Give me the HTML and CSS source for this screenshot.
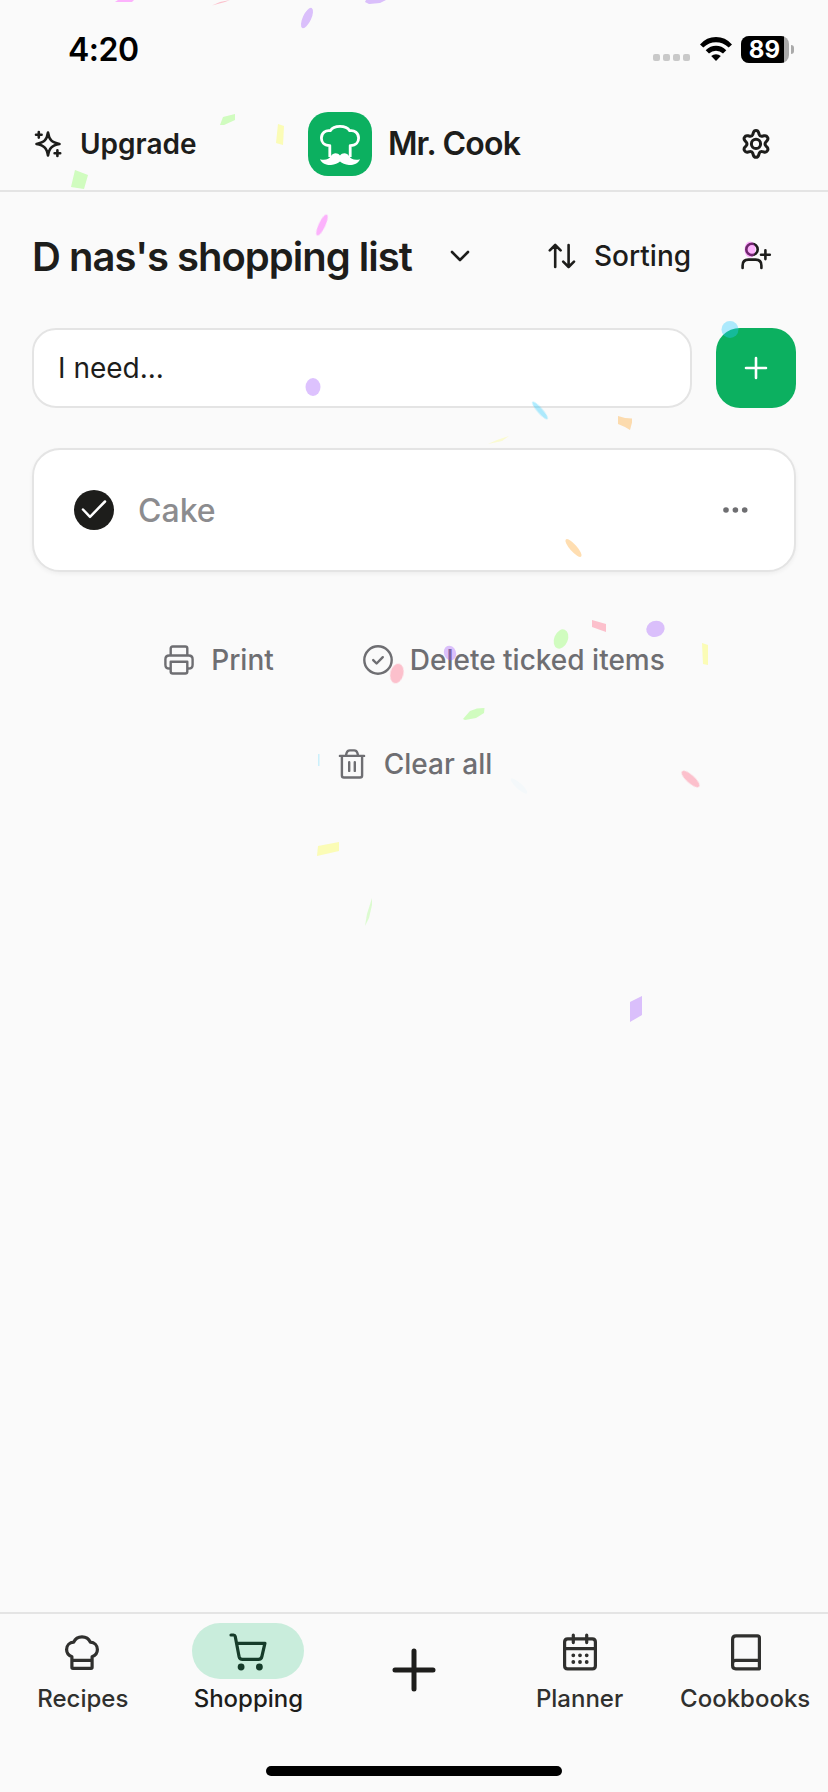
FILE: index.html
```html
<!DOCTYPE html>
<html lang="en">
<head>
<meta charset="utf-8">
<title>Mr. Cook</title>
<link rel="stylesheet" href="styles.css">
</head>
<body>
<div class="app">
  <div class="status">
    <span class="time">4:20</span>
    <div class="signals">
      <span class="cell"><i></i><i></i><i></i><i></i></span>
      <svg class="wifi" width="32" height="24" viewBox="0 0 32 24"><path d="M0 7.4Q6.6 0 16 0t16 7.4l-3.3 3.2Q23 5.2 16 5.2T3.300 10.600z"/><path d="M5.700 13.200Q10.300 8.800 16 8.800t10.300 4.400l-3.300 3.200Q20 13.700 16 13.700t-7 2.700z"/><path d="M11.200 19.100Q13.300 17.200 16 17.200t4.800 1.900L16 24z"/></svg>
      <span class="battery"><span class="level">89</span></span>
      <span class="nub"></span>
    </div>
  </div>

  <header class="header">
    <button class="upgrade">
      <svg class="icon" viewBox="0 0 32 32"><path d="M16 4.500c1.200 7.400 3.500 9.900 11.500 11.500-8 1.600-10.300 4.100-11.500 11.500C14.800 20.100 12.500 17.600 4.500 16 12.500 14.400 14.800 11.900 16 4.500z"/><path d="M6.800 4v5.600M4 6.800h5.600M25.400 22.400v5.600M22.600 25.200h5.600"/></svg>
      <span class="t-upgrade">Upgrade</span>
    </button>
    <div class="brand">
      <span class="logo"><svg width="64" height="64" viewBox="0 0 64 64"><path class="hat" d="M21.800 45V33.600C15.500 33.600 13.400 29.500 13.400 26c0-5 4.300-8.200 8.900-7.300C24 15.900 27.500 14.300 32 14.300s8 1.600 9.700 4.400C46.300 17.800 50.600 21 50.600 26c0 3.500-2.100 7.600-8.400 7.600V45"/><path class="stache" d="M32 43.600c-2.300-3.300-7-3-9 .3-1.800 3-5.500 4.800-11 3.300 2 4.400 6.500 6 11 5.800 3.800-.1 7-1.600 9-3.400 2 1.800 5.200 3.300 9 3.400 4.500.2 9-1.400 11-5.800-5.500 1.500-9.200-.3-11-3.300-2-3.300-6.700-3.600-9-.3z"/></svg></span>
      <span class="t-brand">Mr. Cook</span>
    </div>
    <button class="settings">
      <svg class="icon gear" viewBox="0 0 32 32"><path d="M16 2.500c1.500 0 2.300.9 2.700 2.300l.5 1.700c.5 1.400 1.700 2 3.100 1.700l1.600-.4c1.600-.4 2.900.1 3.600 1.400.7 1.200.5 2.400-.5 3.500l-1.100 1.200c-1 1.200-1 2.800 0 4l1.100 1.200c1 1.100 1.200 2.300.5 3.500-.7 1.300-2 1.800-3.600 1.400l-1.600-.4c-1.400-.3-2.600.3-3.100 1.700l-.5 1.700c-.4 1.400-1.200 2.300-2.700 2.300s-2.300-.9-2.700-2.300l-.5-1.700c-.5-1.400-1.700-2-3.100-1.700l-1.600.4c-1.600.4-2.900-.1-3.600-1.400-.7-1.200-.5-2.400.5-3.500l1.100-1.200c1-1.200 1-2.800 0-4L5 12.700c-1-1.100-1.200-2.300-.5-3.500.7-1.300 2-1.800 3.600-1.400l1.600.4c1.400.3 2.600-.3 3.100-1.700l.5-1.700c.4-1.400 1.200-2.300 2.700-2.300z"/><circle cx="16" cy="15.900" r="4.600"/></svg>
    </button>
  </header>

  <main class="main">
    <div class="title-row">
      <h1 class="title">D nas's shopping list</h1>
      <svg class="icon chevron" viewBox="0 0 32 32"><path d="M8 12l8 8 8-8"/></svg>
      <button class="sorting">
        <svg class="icon" viewBox="0 0 32 32"><path d="M9.200 27V5M3.800 10.400L9.200 5l5.400 5.400M22.600 5v22M17.200 21.600l5.400 5.400 5.400-5.400"/></svg>
        <span class="t-sorting">Sorting</span>
      </button>
      <svg class="icon" viewBox="0 0 32 32"><circle cx="12" cy="9.400" r="5.700"/><path d="M2.600 28v-2.600c0-3.800 2-5.800 5.800-5.800h7.200c3.800 0 5.800 2 5.800 5.800V28M25.400 10.300v8.800M21 14.700h8.800"/></svg>
    </div>

    <div class="entry">
      <div class="field"><span class="t-need">I need...</span></div>
      <button class="add"><svg class="icon" viewBox="0 0 32 32"><path d="M16 6v20M6 16h20"/></svg></button>
    </div>

    <div class="card">
      <span class="check"><svg width="40" height="40" viewBox="0 0 40 40"><path d="M9 19.500l7 7.300L31 11.500"/></svg></span>
      <span class="t-cake">Cake</span>
      <svg class="more" width="32" height="32" viewBox="0 0 32 32"><circle cx="4" cy="16" r="2.800"/><circle cx="13.400" cy="16" r="2.800"/><circle cx="22.700" cy="16" r="2.800"/></svg>
    </div>

    <div class="actions">
      <button class="action">
        <svg class="icon" viewBox="0 0 32 32"><path d="M7.700 11.500V4.500q0-2 2-2h12.600q2 0 2 2v7M7.700 24.500H6.200q-3.800 0-3.800-3.800v-5.400q0-3.800 3.800-3.800h19.600q3.800 0 3.800 3.800v5.400q0 3.800-3.800 3.800h-1.500M7.700 17.800h16.600v9.700q0 2-2 2H9.700q-2 0-2-2z"/></svg>
        <span class="t-print">Print</span>
      </button>
      <button class="action">
        <svg class="icon" viewBox="0 0 32 32"><circle cx="16" cy="16" r="13.700"/><path d="M11.200 16.100l3.400 3.400 6.200-6.300"/></svg>
        <span class="t-delete">Delete ticked items</span>
      </button>
      <button class="action">
        <svg class="icon" viewBox="0 0 32 32"><path d="M3.900 7.900h24.200M9.900 7.500l.7-2.500q.8-2.600 3.200-2.600h4.400q2.400 0 3.200 2.600l.7 2.500M5.900 8v19.500q0 2 2 2h16.200q2 0 2-2V8M13.200 14.200v8.700M18.800 14.200v8.700"/></svg>
        <span class="t-clear">Clear all</span>
      </button>
    </div>
  </main>

  <nav class="tabs">
    <a class="tab">
      <span class="tab-icon"><svg class="icon40" viewBox="1 0 40 40"><path d="M9.900 36.300V25.800C6.500 24.400 4.600 21.800 4.600 18.500c0-4.300 3.100-7.200 7.100-7.400 1.400-3.100 4.500-5.200 8.300-5.200s6.900 2.100 8.300 5.200c4 .2 7.100 3.100 7.100 7.400 0 3.300-1.900 5.900-5.300 7.300v10.500q0 1-1 1H10.900q-1 0-1-1zM9.900 29.400h20.200"/></svg></span>
      <span class="t-recipes">Recipes</span>
    </a>
    <a class="tab active">
      <span class="tab-icon"><svg class="icon40" viewBox="0 0 40 40"><path d="M3 4h2.600q1.300 0 1.600 1.300L11 25.300q.7 3.100 3.600 3.100h15.800q2.900 0 3.500-3l3-13.100H8.700"/><circle class="wheel" cx="13.100" cy="36" r="3.400"/><circle class="wheel" cx="31.400" cy="36" r="3.400"/></svg></span>
      <span class="t-shopping">Shopping</span>
    </a>
    <a class="tab plus"><svg width="44" height="44" viewBox="0 0 44 44"><path d="M22 3v38M3 22h38"/></svg></a>
    <a class="tab">
      <span class="tab-icon"><svg class="icon40" viewBox="0 0 40 40"><path d="M7.700 7.900h24.600q3.100 0 3.100 3.100v23.800q0 3.100-3.100 3.100H7.700q-3.100 0-3.100-3.100V11q0-3.100 3.100-3.100zM4.600 17.600h30.800M13.300 4v7.600M26.700 4v7.600"/><path class="dots" d="M13.300 24.300h.01M20 24.300h.01M26.700 24.300h.01M13.300 31h.01M20 31h.01M26.700 31h.01"/></svg></span>
      <span class="t-planner">Planner</span>
    </a>
    <a class="tab">
      <span class="tab-icon"><svg class="icon40" viewBox="-1 0 40 40"><path d="M6.600 34.800V8.200q0-3.400 3.400-3.400h21.400q2 0 2 2v31H9.800q-3.200 0-3.200-3v-2.400q0-3 3.200-3h23.600"/></svg></span>
      <span class="t-cookbooks">Cookbooks</span>
    </a>
  </nav>
  <div class="home"><span></span></div>

  <svg class="confetti" width="828" height="1792" viewBox="0 0 828 1792">
    <g fill="#a25afd">
      <path d="M365 2l4 2 11-1 6-3h-20z"/>
      <ellipse cx="307" cy="18" rx="4.200" ry="11" transform="rotate(25 307 18)"/>
      <ellipse cx="313" cy="387" rx="7.500" ry="9"/>
      <ellipse cx="450" cy="653" rx="6" ry="7.500" transform="rotate(-20 450 653)"/>
      <ellipse cx="655.500" cy="629" rx="9.300" ry="8" transform="rotate(-20 655 629)"/>
      <path d="M630 1002l12-6v19l-12 7z"/>
    </g>
    <g fill="#ff36ff">
      <path d="M115 2l3-2h16l-2 2z"/>
      <ellipse cx="322" cy="225" rx="3.300" ry="11.500" transform="rotate(25 322 225)"/>
      <ellipse cx="750" cy="249.500" rx="5.500" ry="8"/>
    </g>
    <g fill="#ff5e7e">
      <path d="M212 5.500L220 2l10-2-5 2z"/>
      <ellipse cx="397" cy="673.500" rx="6.500" ry="10" transform="rotate(14 397 673)"/>
      <path d="M592 620l14 4v8l-14-5z"/>
      <ellipse cx="690.500" cy="779" rx="4" ry="11.500" transform="rotate(-48 690.500 779)"/>
    </g>
    <g fill="#88ff5a">
      <path d="M220 125l3-8 12-3v6l-11 5zM75 170l13 5-4 14-13-2z"/>
      <ellipse cx="561" cy="639" rx="6.800" ry="10" transform="rotate(22 561 639)"/>
      <path d="M463 719l7-8 7-2.500 7.500-.5-.5 5-8 5-11 2z"/>
      <path opacity=".7" d="M372 898v7l-3 13-4 8 2-12z"/>
    </g>
    <g fill="#fcff42">
      <path d="M278 124l6 2-1 19-7-2zM702 643l6 2v20l-5-1zM318 846l21-4v9l-22 5z"/>
      <path opacity=".6" d="M488 444l9-4 12-4-7 5z"/>
    </g>
    <g fill="#26ccff">
      <circle cx="730" cy="329.500" r="8.500"/>
      <ellipse cx="540" cy="410.500" rx="2.600" ry="11.500" transform="rotate(-41 540 410.500)"/>
      <path opacity=".6" d="M318 754h1.500v12h-1.500z"/>
      <ellipse opacity=".08" cx="519" cy="786" rx="3" ry="11" transform="rotate(-48 519 786)"/>
    </g>
    <g fill="#ffa62d">
      <path d="M618 416l7 2 7 .5v4l-2 7.500-5-3-7-3z"/>
      <ellipse cx="573.500" cy="548" rx="3.500" ry="11.500" transform="rotate(-42 573.500 548)"/>
    </g>
  </svg>
</div>
</body>
</html>
```

FILE: styles.css
```css
* { box-sizing: border-box; }
body { margin: 0; background: #fafafa; color: #1d1d1b; font-family: Inter, "Noto Sans", sans-serif; }
button { border: 0; padding: 0; background: none; color: inherit; font: inherit; }
svg { display: block; flex: none; }
span, h1 { white-space: nowrap; }

.app { position: relative; display: flex; flex-direction: column; width: 828px; height: 1792px; overflow: hidden; }

.status { display: flex; justify-content: space-between; height: 96px; padding: 0 34px 0 68px; color: #000; }
.time { margin-top: 30px; font-size: 32px; line-height: 40px; font-weight: 600; letter-spacing: -.5px; }
.signals { display: flex; align-items: flex-start; padding-top: 36px; }
.cell { display: flex; gap: 3px; margin: 18px 10px 0 0; }
.cell i { width: 7px; height: 7px; border-radius: 2px; background: #c9c9c9; }
.wifi { margin: 1px 9px 0 0; fill: #000; }
.battery { width: 48px; height: 27px; border-radius: 8px; overflow: hidden; background: #aaa; }
.level { display: block; width: 43px; padding-left: 4px; background: #000; color: #fff; font-size: 24px; line-height: 28px; font-weight: 700; text-align: center; letter-spacing: .2px; }
.nub { width: 3px; height: 9px; margin: 9px 0 0 2px; border-radius: 0 3px 3px 0; background: #aaa; }

.icon { width: 32px; height: 32px; fill: none; stroke: currentColor; stroke-width: 2.6; stroke-linecap: round; stroke-linejoin: round; }
.gear { stroke-width: 3; }

.header { display: grid; grid-template-columns: 1fr auto 1fr; align-items: center; height: 96px; padding: 1px 56px 0 32px; border-bottom: 2px solid #e4e4e4; }
.upgrade { display: flex; align-items: center; gap: 16px; font-size: 28px; font-weight: 600; line-height: 40px; }
.brand { display: flex; align-items: center; gap: 16px; margin-left: 24px; font-size: 32px; font-weight: 600; line-height: 40px; letter-spacing: -.8px; }
.logo { border-radius: 20px; background: #0cb060; }
.hat { fill: none; stroke: #fff; stroke-width: 2.8; stroke-linejoin: round; }
.stache { fill: #fff; }
.settings { justify-self: end; }

.main { flex: 1; padding: 24px 32px 0; }
.title-row { display: flex; align-items: center; height: 80px; padding-right: 24px; }
.title { width: 412px; margin: 0; padding-top: 2px; font-size: 40px; line-height: 48px; font-weight: 600; letter-spacing: -1px; }
.sorting { display: flex; align-items: center; gap: 16px; margin-left: 70px; margin-right: auto; font-size: 28px; font-weight: 500; line-height: 40px; }

.entry { display: flex; gap: 24px; margin-top: 32px; }
.field { flex: 1; display: flex; align-items: center; height: 80px; padding: 0 24px; border: 2px solid #e4e4e4; border-radius: 24px; background: #fff; font-size: 28px; }
.add { display: grid; place-items: center; width: 80px; height: 80px; border-radius: 24px; background: #0cb060; color: #fff; }

.card { display: flex; align-items: center; gap: 24px; height: 124px; margin-top: 40px; padding: 0 40px; border: 2px solid #e4e4e4; border-radius: 28px; background: #fff; box-shadow: 0 2px 4px rgba(0, 0, 0, .05); color: #8c8c8f; font-size: 32px; font-weight: 500; }
.check { border-radius: 50%; background: #1d1d1b; }
.check path { fill: none; stroke: #fff; stroke-width: 2.500; stroke-linecap: round; stroke-linejoin: round; }
.more { margin-left: auto; fill: #6e6e71; }

.actions { display: flex; flex-wrap: wrap; justify-content: center; gap: 24px; margin-top: 48px; }
.action { display: flex; align-items: center; gap: 16px; height: 80px; padding: 0 32px; color: #6e6e72; font-size: 28px; font-weight: 500; }
.action .icon { stroke-width: 2.4; }

.tabs { display: grid; grid-template-columns: repeat(5, 1fr); height: 136px; padding-top: 9px; border-top: 2px solid #e4e4e4; }
.tab { display: flex; flex-direction: column; align-items: center; color: #30302e; font-size: 24px; line-height: 32px; font-weight: 500; }
.tab-icon { display: grid; place-items: center; width: 112px; height: 56px; margin-bottom: 4px; border-radius: 28px; }
.icon40 { width: 40px; height: 40px; fill: none; stroke: currentColor; stroke-width: 3.2; stroke-linecap: round; stroke-linejoin: round; }
.dots { stroke-width: 3.800; }
.wheel { fill: currentColor; stroke: none; }
.active { color: #1d1d1b; }
.active .tab-icon { background: #c9eddc; color: #163c2a; }
.plus { padding-top: 25px; }
.plus path { fill: none; stroke: #1d1d1b; stroke-width: 5; stroke-linecap: round; }

.home { display: flex; justify-content: center; height: 44px; padding-top: 18px; }
.home span { width: 296px; height: 10px; border-radius: 5px; background: #000; }

.confetti { position: absolute; inset: 0; pointer-events: none; }
.confetti g { opacity: .37; }
```
